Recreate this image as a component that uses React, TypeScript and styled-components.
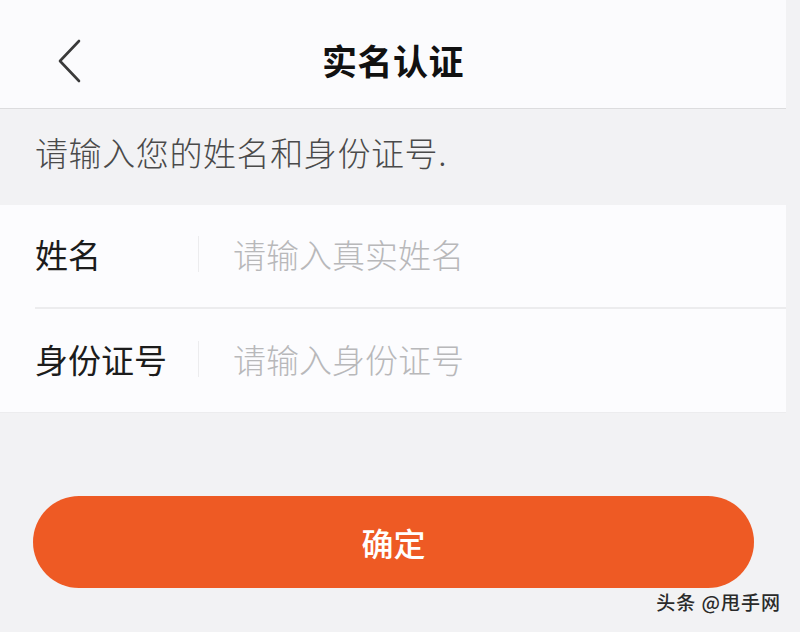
//-----------------------------------------------------------------------------
// Imports
//-----------------------------------------------------------------------------
import React, { useState } from 'react'
import styled, { createGlobalStyle } from 'styled-components'

//-----------------------------------------------------------------------------
// Global
//-----------------------------------------------------------------------------
const GlobalStyle = createGlobalStyle`
  html, body {
    margin: 0;
    padding: 0;
    background: #f2f2f4;
  }
  body {
    font-family: "Noto Sans CJK SC", "Noto Sans", sans-serif;
  }
  * {
    box-sizing: border-box;
  }
`

//-----------------------------------------------------------------------------
// Component
//-----------------------------------------------------------------------------
export const App = () => {

  // State
  const [ name, setName ] = useState('')
  const [ idNumber, setIdNumber ] = useState('')

  return (
    <Page>
      <GlobalStyle />
      <Header>
        <BackButton aria-label="返回">
          <svg width="26" height="44" viewBox="0 0 26 44" fill="none">
            <path
              d="M22 2 L3 22 L22 42"
              stroke="#3a3a3a"
              strokeWidth="2.6"
              strokeLinecap="round"
              strokeLinejoin="round"/>
          </svg>
        </BackButton>
        <Title>实名认证</Title>
        <span />
      </Header>

      <Hint>请输入您的姓名和身份证号.</Hint>

      <Card>
        <Row>
          <Label>姓名</Label>
          <Separator />
          <Field
            onChange={e => setName(e.target.value)}
            placeholder="请输入真实姓名"
            value={name}/>
        </Row>
        <Row divided>
          <Label>身份证号</Label>
          <Separator />
          <Field
            onChange={e => setIdNumber(e.target.value)}
            placeholder="请输入身份证号"
            value={idNumber}/>
        </Row>
      </Card>

      <SubmitButton>确定</SubmitButton>

      <Watermark>头条 @甩手网</Watermark>
    </Page>
  )
}

//-----------------------------------------------------------------------------
// Styled Components
//-----------------------------------------------------------------------------
const Page = styled.div`
  position: relative;
  width: 800px;
  min-height: 632px;
  padding-right: 14px;
  background: #f2f2f4;
  display: flex;
  flex-direction: column;
`

const Header = styled.div`
  height: 109px;
  padding-top: 11px;
  background: #fbfbfd;
  border-bottom: 1px solid #dcdcde;
  display: grid;
  grid-template-columns: 1fr auto 1fr;
  align-items: center;
`

const BackButton = styled.button`
  justify-self: start;
  margin-left: 57px;
  margin-top: 2px;
  padding: 0;
  border: none;
  background: none;
  display: flex;
  cursor: pointer;
`

const Title = styled.h1`
  margin: 0;
  font-size: 35px;
  font-weight: 700;
  color: #111;
  letter-spacing: 0.5px;
`

const Hint = styled.div`
  height: 96px;
  padding-left: 35px;
  padding-bottom: 10px;
  display: flex;
  align-items: center;
  font-size: 33px;
  font-weight: 300;
  color: #4a4a4a;
  letter-spacing: 0.6px;
`

const Card = styled.div`
  background: #fcfcfe;
  border-bottom: 1px solid #ececee;
`

const Row = styled.div<{ divided?: boolean }>`
  height: ${({ divided }) => divided ? '105px' : '102px'};
  margin-left: 35px;
  padding-bottom: 4px;
  display: flex;
  align-items: center;
  border-top: ${({ divided }) => divided ? '2px solid #ececee' : 'none'};
`

const Label = styled.div`
  width: 163px;
  font-size: 33px;
  font-weight: 400;
  color: #1c1c1c;
`

const Separator = styled.div`
  width: 1px;
  height: 36px;
  background: #ececee;
`

const Field = styled.input`
  flex: 1;
  margin-left: 32px;
  border: none;
  outline: none;
  background: transparent;
  font-family: inherit;
  font-size: 33px;
  font-weight: 300;
  color: #222;

  &::placeholder {
    color: #b8b8ba;
  }
`

const SubmitButton = styled.button`
  margin: 83px 32px 0 33px;
  height: 92px;
  border: none;
  border-radius: 46px;
  background: #ee5a24;
  color: #fff;
  font-family: inherit;
  font-size: 32px;
  font-weight: 500;
  cursor: pointer;
`

const Watermark = styled.div`
  position: absolute;
  right: 19px;
  bottom: 17px;
  font-size: 19px;
  font-weight: 500;
  color: #2a2a2a;
  letter-spacing: 1px;
`

export default App
